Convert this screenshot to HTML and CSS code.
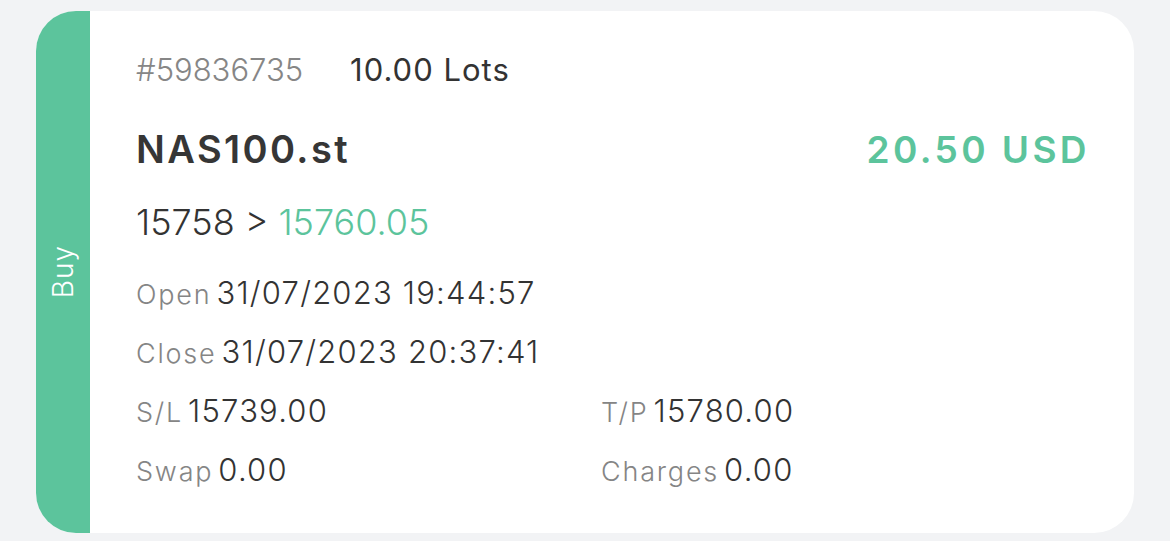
FILE: index.html
```html
<!DOCTYPE html>
<html>
<head>
<meta charset="utf-8">
<link rel="stylesheet" href="styles.css">
</head>
<body>
<div class="card">
  <div class="side"><span class="side-label">Buy</span></div>
  <div class="content">
    <div class="row row-top">
      <span class="ticket">#59836735</span>
      <span class="lots">10.00 Lots</span>
    </div>
    <div class="row row-symbol">
      <span class="symbol">NAS100.st</span>
      <span class="profit">20.50 USD</span>
    </div>
    <div class="row row-price">
      <span class="dark">15758 &gt; </span><span class="green">15760.05</span>
    </div>
    <div class="row row-detail first"><span class="label">Open</span><span class="value">31/07/2023 19:44:57</span></div>
    <div class="row row-detail"><span class="label">Close</span><span class="value">31/07/2023 20:37:41</span></div>
    <div class="grid">
      <div class="row row-detail"><span class="label">S/L</span><span class="value">15739.00</span></div>
      <div class="row row-detail"><span class="label">T/P</span><span class="value">15780.00</span></div>
      <div class="row row-detail"><span class="label">Swap</span><span class="value">0.00</span></div>
      <div class="row row-detail"><span class="label">Charges</span><span class="value">0.00</span></div>
    </div>
  </div>
</div>
</body>
</html>
```

FILE: styles.css
```css
html, body {
  margin: 0;
  padding: 0;
}
body {
  background: #f2f3f5;
  font-family: "Inter", "Lato", sans-serif;
  width: 1170px;
  height: 541px;
  overflow: hidden;
}
.card {
  margin: 11px 0 0 36px;
  width: 1098px;
  height: 522px;
  background: #ffffff;
  border-radius: 40px;
  overflow: hidden;
  display: flex;
}
.side {
  width: 54px;
  flex: none;
  background: #5cc49c;
  display: flex;
  align-items: center;
  justify-content: center;
}
.side-label {
  color: #ffffff;
  font-size: 28px;
  font-weight: 300;
  letter-spacing: 1px;
  writing-mode: vertical-rl;
  transform: rotate(180deg);
}
.content {
  flex: 1;
  padding: 38px 47px 0 46px;
  display: flex;
  flex-direction: column;
}
.row {
  display: flex;
  align-items: baseline;
  white-space: nowrap;
}
.row-top {
  height: 42px;
  line-height: 42px;
  font-size: 31px;
  font-weight: 300;
  gap: 47px;
}
.ticket { color: #868686; }
.lots { color: #333333; font-weight: 400; letter-spacing: 1px; }
.row-symbol {
  margin-top: 32px;
  height: 52px;
  line-height: 52px;
  justify-content: space-between;
}
.symbol {
  font-size: 38px;
  font-weight: 600;
  letter-spacing: 2.4px;
  color: #363636;
}
.profit {
  font-size: 37px;
  font-weight: 600;
  letter-spacing: 3.4px;
  margin-right: -3px;
  color: #5cc49c;
}
.row-price {
  margin-top: 25px;
  height: 44px;
  line-height: 44px;
  font-size: 36px;
  font-weight: 300;
}
.dark { color: #333333; white-space: pre; }
.green { color: #5cc49c; }
.row-detail {
  margin-top: 15px;
  height: 44px;
  line-height: 44px;
}
.row-detail.first { margin-top: 27px; }
.label {
  color: #858585;
  font-size: 27px;
  font-weight: 300;
  letter-spacing: 1.8px;
  white-space: pre;
}
.value {
  color: #333333;
  font-size: 31px;
  font-weight: 300;
  letter-spacing: 1.2px;
  margin-left: 5px;
}
.grid {
  display: grid;
  grid-template-columns: 465px 1fr;
}
```
